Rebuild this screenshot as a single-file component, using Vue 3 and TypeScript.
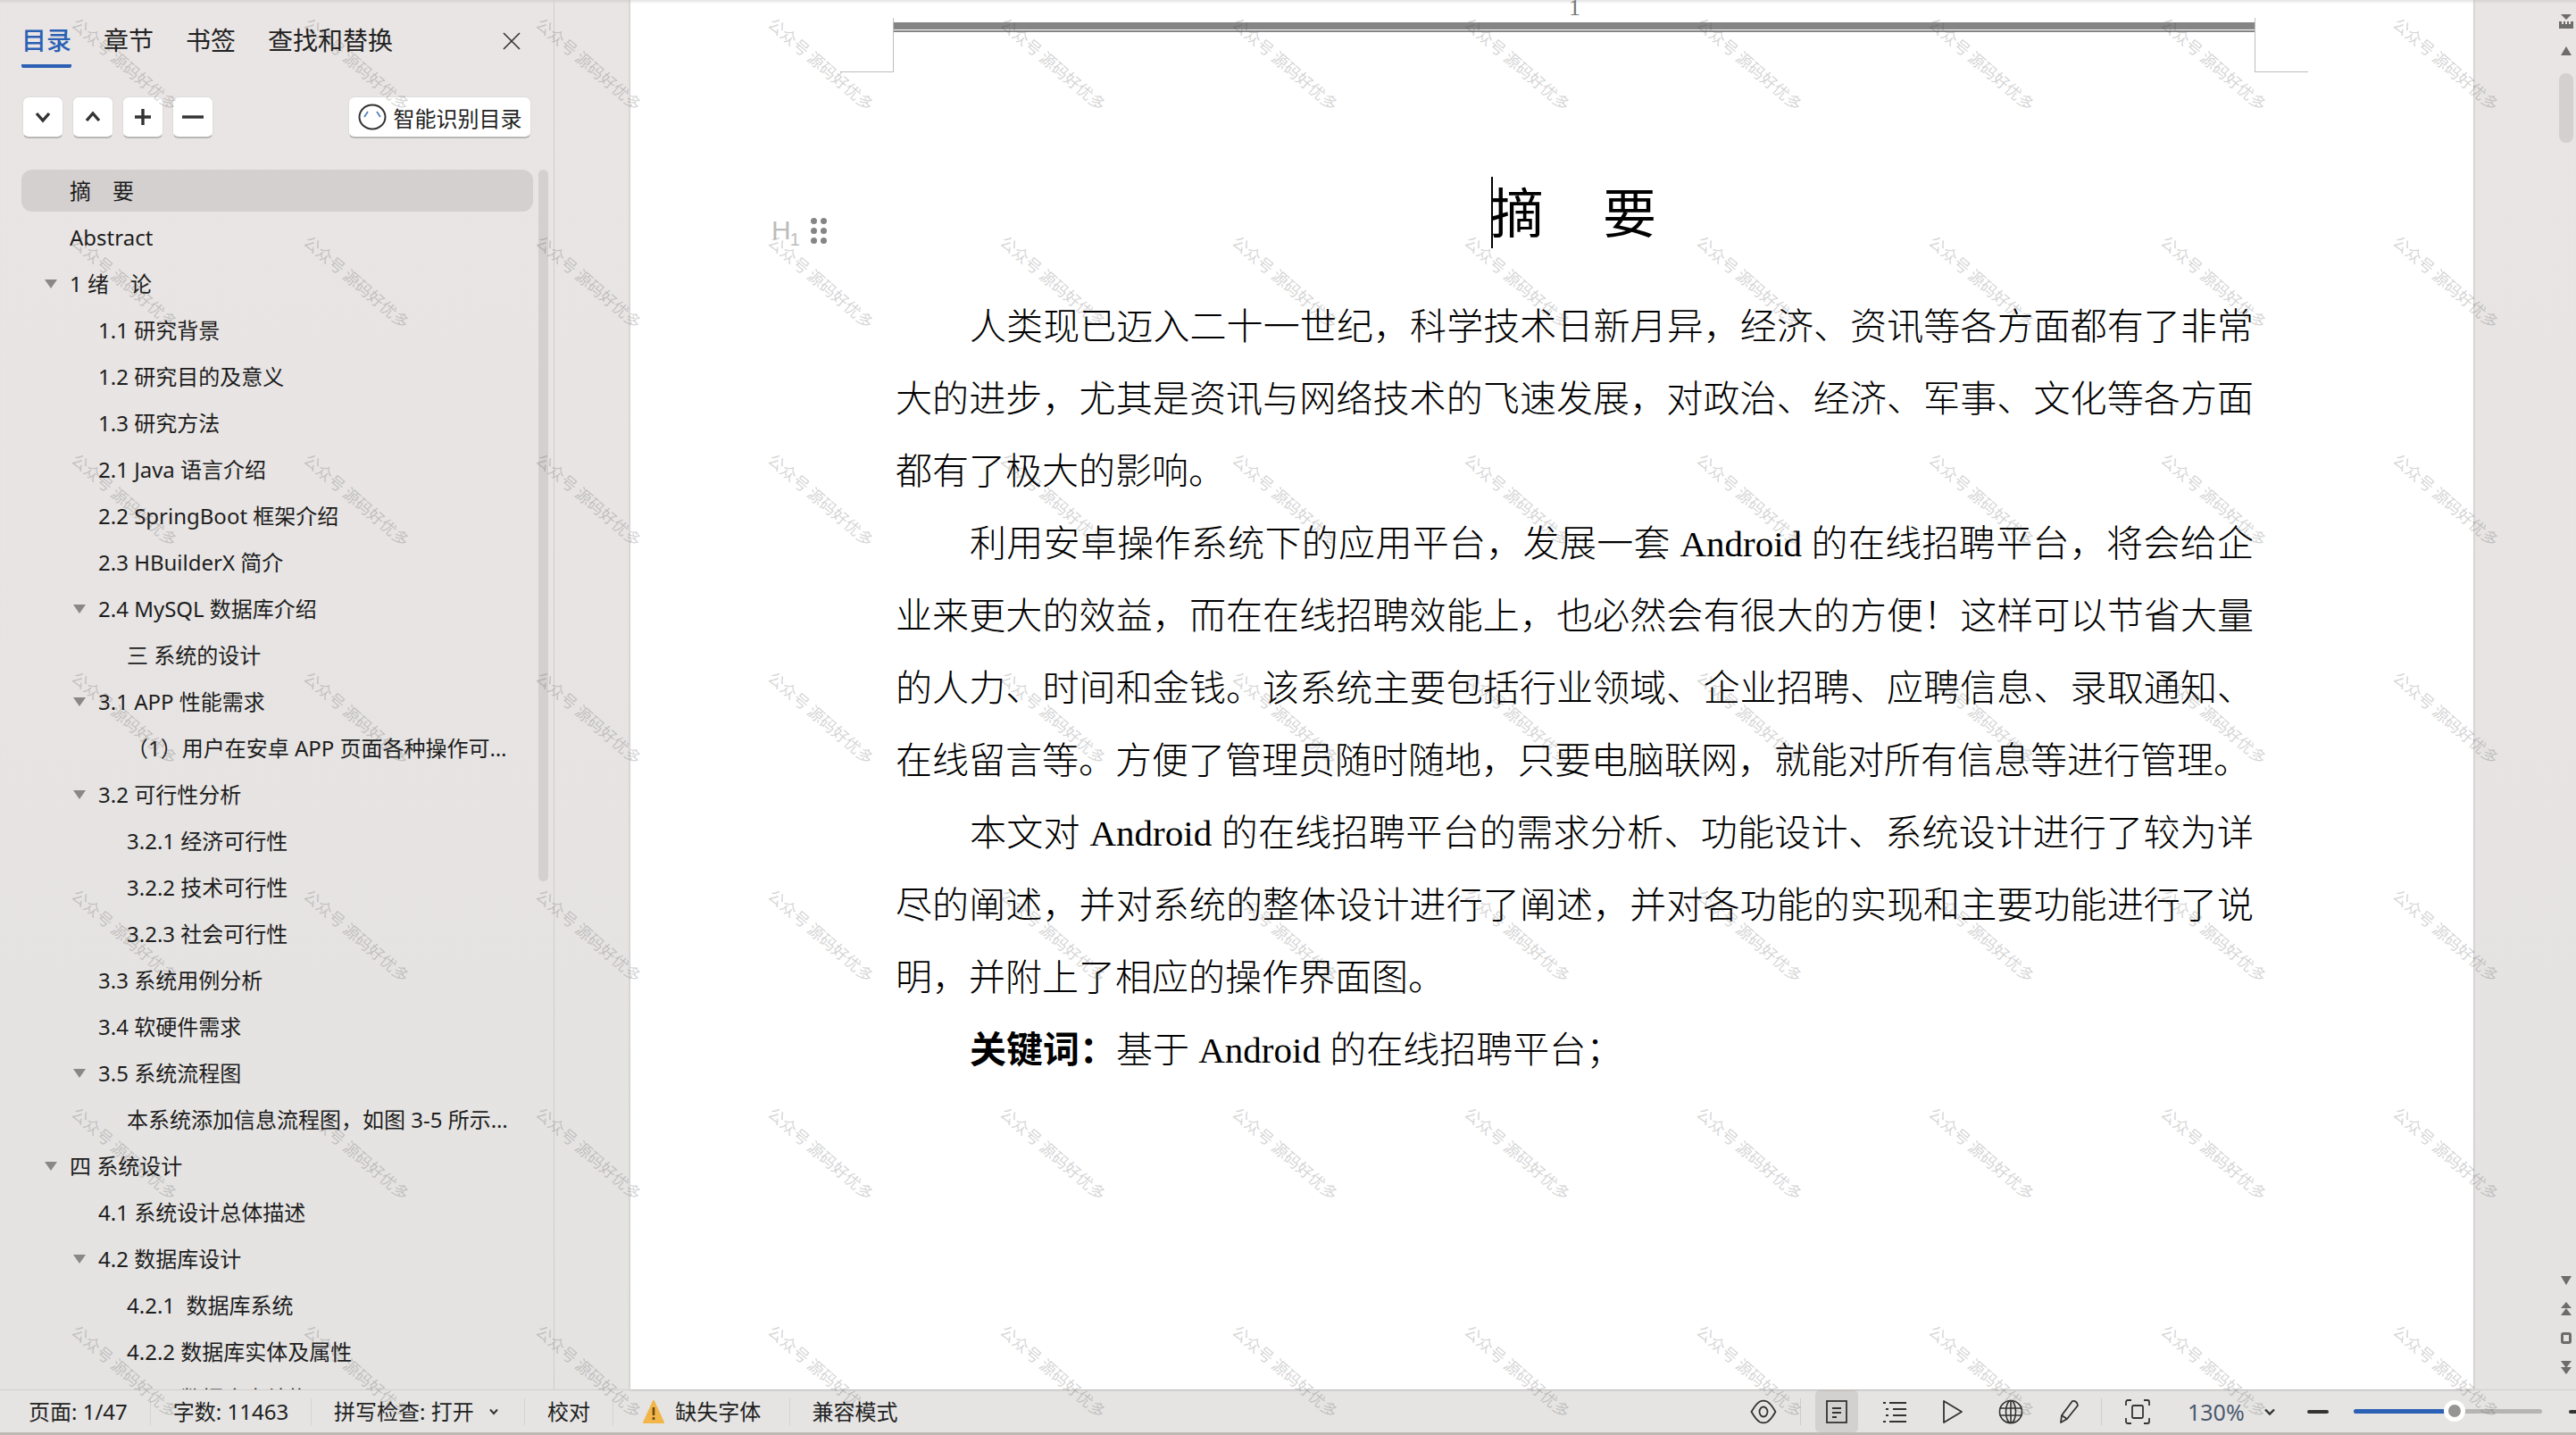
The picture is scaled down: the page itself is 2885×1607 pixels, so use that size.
<script setup lang="ts">
interface TocRow {
  text: string
  level: 0 | 1 | 2
  open?: boolean
  active?: boolean
}

const tabs = ['目录', '章节', '书签', '查找和替换']

const toc: TocRow[] = [
  { text: '摘　要', level: 0, active: true },
  { text: 'Abstract', level: 0 },
  { text: '1 绪　论', level: 0, open: true },
  { text: '1.1 研究背景', level: 1 },
  { text: '1.2 研究目的及意义', level: 1 },
  { text: '1.3 研究方法', level: 1 },
  { text: '2.1 Java 语言介绍', level: 1 },
  { text: '2.2 SpringBoot 框架介绍', level: 1 },
  { text: '2.3 HBuilderX 简介', level: 1 },
  { text: '2.4 MySQL 数据库介绍', level: 1, open: true },
  { text: '三 系统的设计', level: 2 },
  { text: '3.1 APP 性能需求', level: 1, open: true },
  { text: '（1）用户在安卓 APP 页面各种操作可以得到及时响应', level: 2 },
  { text: '3.2 可行性分析', level: 1, open: true },
  { text: '3.2.1 经济可行性', level: 2 },
  { text: '3.2.2 技术可行性', level: 2 },
  { text: '3.2.3 社会可行性', level: 2 },
  { text: '3.3 系统用例分析', level: 1 },
  { text: '3.4 软硬件需求', level: 1 },
  { text: '3.5 系统流程图', level: 1, open: true },
  { text: '本系统添加信息流程图，如图 3-5 所示：添加信息', level: 2 },
  { text: '四 系统设计', level: 0, open: true },
  { text: '4.1 系统设计总体描述', level: 1 },
  { text: '4.2 数据库设计', level: 1, open: true },
  { text: '4.2.1  数据库系统', level: 2 },
  { text: '4.2.2 数据库实体及属性', level: 2 },
  { text: '4.2.3 数据库表结构', level: 2 },
]

const paragraphs: string[][] = [
  [
    '人类现已迈入二十一世纪，科学技术日新月异，经济、资讯等各方面都有了非常',
    '大的进步，尤其是资讯与网络技术的飞速发展，对政治、经济、军事、文化等各方面',
    '都有了极大的影响。',
  ],
  [
    '利用安卓操作系统下的应用平台，发展一套 Android 的在线招聘平台，将会给企',
    '业来更大的效益，而在在线招聘效能上，也必然会有很大的方便！这样可以节省大量',
    '的人力、时间和金钱。该系统主要包括行业领域、企业招聘、应聘信息、录取通知、',
    '在线留言等。方便了管理员随时随地，只要电脑联网，就能对所有信息等进行管理。',
  ],
  [
    '本文对 Android 的在线招聘平台的需求分析、功能设计、系统设计进行了较为详',
    '尽的阐述，并对系统的整体设计进行了阐述，并对各功能的实现和主要功能进行了说',
    '明，并附上了相应的操作界面图。',
  ],
]

const watermarks = 11 * 7
</script>

<template>
  <div class="app">
    <div class="main">
      <aside class="side">
        <div class="panel">
          <div class="tabs">
            <span v-for="(tab, i) in tabs" :key="tab" class="tab" :class="{ on: i === 0 }">{{ tab }}</span>
            <svg class="close" width="22" height="22" viewBox="0 0 22 22" fill="none" stroke="#333" stroke-width="1.6">
              <path d="M2 2 20 20M20 2 2 20" />
            </svg>
          </div>
          <div class="tools">
            <button class="tool">
              <svg width="20" height="20" viewBox="0 0 20 20" fill="none" stroke="#333" stroke-width="3.4"><path d="M3 6 10 14 17 6" /></svg>
            </button>
            <button class="tool">
              <svg width="20" height="20" viewBox="0 0 20 20" fill="none" stroke="#333" stroke-width="3.4"><path d="M3 14 10 6 17 14" /></svg>
            </button>
            <button class="tool">
              <svg width="20" height="22" viewBox="0 0 20 22" fill="none" stroke="#333" stroke-width="3.4"><path d="M1 11H19M10 2V20" /></svg>
            </button>
            <button class="tool">
              <svg width="24" height="20" viewBox="0 0 24 20" fill="none" stroke="#333" stroke-width="3.4"><path d="M0 10H24" /></svg>
            </button>
            <button class="ai">
              <svg width="32" height="30" viewBox="0 0 32 30" fill="none">
                <ellipse cx="16" cy="15" rx="14.5" ry="13.5" stroke="#333" stroke-width="2" />
                <path d="M7 15 11 9M25 15 21 9" stroke="#4a78b8" stroke-width="1.6" />
              </svg>
              <span>智能识别目录</span>
            </button>
          </div>
          <div class="tree-wrap">
            <ul class="tree">
              <li v-for="row in toc" :key="row.text" class="row" :class="['lv' + row.level, { active: row.active }]">
                <i class="caret" :class="{ open: row.open }"></i>
                <span class="row-text">{{ row.text }}</span>
              </li>
            </ul>
            <div class="tree-thumb"></div>
          </div>
        </div>
      </aside>

      <main class="page">
        <div class="page-no">1</div>
        <div class="head-rule"></div>
        <div class="heading">
          <span class="h-mark">H<sub>1</sub></span>
          <span class="grip"><i v-for="n in 6" :key="n"></i></span>
          <i class="cursor"></i>
          <h1 class="title">摘　要</h1>
        </div>
        <div class="body">
          <p v-for="(lines, i) in paragraphs" :key="i" class="para">
            <span v-for="(line, j) in lines" :key="j" class="line" :class="{ first: j === 0, last: j === lines.length - 1 }">{{ line }}</span>
          </p>
          <p class="para">
            <span class="line first last"><b>关键词：</b>基于 Android 的在线招聘平台；</span>
          </p>
        </div>
      </main>

      <aside class="rail">
        <svg width="16" height="16" viewBox="0 0 16 16" fill="#6e6b6b"><path d="M2 0H14L8 6ZM0 8H3V11H5V8H7V11H9V8H11V11H13V8H16V16H0Z" /></svg>
        <svg class="rail-up" width="12" height="10" viewBox="0 0 12 10" fill="#6e6b6b"><path d="M6 0 12 10H0Z" /></svg>
        <div class="rail-thumb"></div>
        <div class="rail-foot">
          <svg width="12" height="10" viewBox="0 0 12 10" fill="#6e6b6b"><path d="M0 0H12L6 10Z" /></svg>
          <svg width="12" height="15" viewBox="0 0 12 15" fill="#6e6b6b"><path d="M6 0 12 7H0ZM6 7 12 15H0Z" /></svg>
          <svg width="12" height="13" viewBox="0 0 12 13" fill="none" stroke="#6e6b6b" stroke-width="3"><rect x="1.5" y="1.5" width="9" height="10" rx="1.5" /></svg>
          <svg width="12" height="15" viewBox="0 0 12 15" fill="#6e6b6b"><path d="M0 0H12L6 8ZM0 7H12L6 15Z" /></svg>
        </div>
      </aside>
    </div>

    <footer class="status">
      <div class="status-left">
        <span class="item">页面: 1/47</span>
        <span class="item">字数: 11463</span>
        <span class="item">拼写检查: 打开
          <svg class="chev" width="10" height="8" viewBox="0 0 10 8" fill="none" stroke="#333" stroke-width="2"><path d="M1 1.5 5 6 9 1.5" /></svg>
        </span>
        <span class="item">校对</span>
        <span class="item warn">
          <svg width="24" height="26" viewBox="0 0 24 26"><path d="M12 1 23 25H1Z" fill="#f2b54a" stroke="#f2b54a" stroke-linejoin="round" stroke-width="2" /><path d="M12 8V17M12 19V22" stroke="#6b4a10" stroke-width="2.6" /></svg>
          缺失字体
        </span>
        <span class="item last-item">兼容模式</span>
      </div>
      <div class="status-right">
        <span class="ico">
          <svg width="30" height="28" viewBox="0 0 30 28" fill="none" stroke="#333" stroke-width="1.8"><path d="M1.5 14C5 8 8 4 11 2.5 13.500 1.500 16.500 1.500 19 2.500 22 4 25 8 28.500 14 25 20 22 24 19 25.500 16.500 26.500 13.500 26.500 11 25.500 8 24 5 20 1.500 14Z" /><ellipse cx="15" cy="14" rx="4.500" ry="5.500" /></svg>
        </span>
        <span class="sep"></span>
        <span class="ico on">
          <svg width="24" height="26" viewBox="0 0 24 26" fill="none" stroke="#333" stroke-width="1.8"><rect x="1" y="1" width="22" height="24" /><path d="M7 9H17M7 14H17M7 19H12" /></svg>
        </span>
        <span class="ico">
          <svg width="28" height="24" viewBox="0 0 28 24" fill="none" stroke="#333" stroke-width="1.8"><path d="M8 2H27M12 9H27M12 16H27M8 23H27M1 2H4M4 9H7M4 16H7M1 23H4" /></svg>
        </span>
        <span class="ico">
          <svg width="24" height="28" viewBox="0 0 24 28" fill="none" stroke="#333" stroke-width="1.8"><path d="M2 2 22 14 2 26Z" stroke-linejoin="round" /></svg>
        </span>
        <span class="ico">
          <svg width="28" height="28" viewBox="0 0 28 28" fill="none" stroke="#333" stroke-width="1.6"><circle cx="14" cy="14" r="12.5" /><ellipse cx="14" cy="14" rx="5.5" ry="12.5" /><path d="M14 1.5V26.5M1.5 10H26.5M1.5 18H26.5" /></svg>
        </span>
        <span class="ico pen">
          <svg width="28" height="28" viewBox="0 0 28 28" fill="none" stroke="#333" stroke-width="1.8" stroke-linejoin="round"><path d="M8 18 20 2C23 1 26 4 26 7L14 22 7 26Z" /><path d="M8 18 14 22" /></svg>
        </span>
        <span class="sep narrow"></span>
        <span class="ico">
          <svg width="28" height="28" viewBox="0 0 28 28" fill="none" stroke="#333" stroke-width="1.8"><path d="M1 7V3C1 2 2 1 3 1H7M21 1H25C26 1 27 2 27 3V7M27 21V25C27 26 26 27 25 27H21M7 27H3C2 27 1 26 1 25V21" /><rect x="8" y="7" width="12" height="14" rx="1.5" /></svg>
        </span>
        <span class="zoom">130%</span>
        <svg class="zoom-chev" width="12" height="8" viewBox="0 0 12 8" fill="none" stroke="#333" stroke-width="2.4"><path d="M1 1.5 6 6.5 11 1.5" /></svg>
        <span class="minus"></span>
        <div class="slider">
          <div class="slider-fill"></div>
          <div class="slider-knob"></div>
        </div>
        <span class="plus"></span>
      </div>
    </footer>

    <div class="marks">
      <span v-for="n in watermarks" :key="n" class="mark"><span>公众号 源码好优多</span></span>
    </div>
  </div>
</template>

<style scoped>
.app {
  position: relative;
  width: 2885px;
  height: 1607px;
  overflow: hidden;
  display: flex;
  flex-direction: column;
  background: linear-gradient(180deg, #e9e5e4, #e4e3e2);
  font-family: "Noto Sans", "Noto Sans CJK SC", sans-serif;
  color: #222;
}

.main {
  flex: 1;
  min-height: 0;
  display: flex;
}

.side {
  flex: none;
  width: 706px;
  box-shadow: inset 0 4px 3px -2px #d4d2d1;
}

.panel {
  width: 621px;
  height: 100%;
  box-sizing: border-box;
  border-right: 1px solid #d0cdcc;
  display: flex;
  flex-direction: column;
}

.tabs {
  height: 72px;
  box-sizing: border-box;
  padding: 26px 0 0 24px;
  display: flex;
  gap: 36px;
  position: relative;
}

.tab {
  font-size: 28px;
  line-height: 38px;
  height: 46px;
  font-weight: 400;
}

.tab.on {
  color: #2b60b5;
  font-weight: 500;
  border-bottom: 4px solid #2b60b5;
  border-radius: 0 0 2px 2px;
}

.close {
  position: absolute;
  left: 562px;
  top: 35px;
}

.tools {
  margin-top: 36px;
  height: 47px;
  padding: 0 25px 0 25px;
  display: flex;
  gap: 10px;
}

.tool,
.ai {
  border: 1px solid #dedcdb;
  border-bottom: 2px solid #b9b7b6;
  border-radius: 7px;
  background: #fff;
  padding: 0;
  display: flex;
  align-items: center;
  justify-content: center;
  font-family: inherit;
  color: #222;
}

.tool {
  width: 46px;
}

.ai {
  margin-left: auto;
  width: 205px;
  gap: 8px;
  font-size: 24px;
}

.tree-wrap {
  margin-top: 35px;
  flex: 1;
  min-height: 0;
  display: flex;
  overflow: hidden;
}

.tree {
  list-style: none;
  margin: 0 0 0 24px;
  padding: 0;
  width: 573px;
  flex: none;
  display: flex;
  flex-direction: column;
  gap: 5px;
}

.row {
  flex: none;
  height: 47px;
  border-radius: 12px;
  display: flex;
  align-items: center;
  font-size: 24px;
  color: #1d1d1d;
  padding-right: 7px;
}

.row.active {
  background: #d3d0cf;
}

.lv0 {
  padding-left: 26px;
}

.lv1 {
  padding-left: 58px;
}

.lv2 {
  padding-left: 90px;
}

.caret {
  flex: none;
  width: 28px;
  height: 10px;
}

.caret.open::before {
  content: "";
  display: block;
  width: 0;
  border-left: 7px solid transparent;
  border-right: 7px solid transparent;
  border-top: 10px solid #8a8887;
}

.row-text {
  white-space: pre;
  overflow: hidden;
  text-overflow: ellipsis;
  line-height: 32px;
}

.tree-thumb {
  flex: none;
  margin-left: 6px;
  width: 11px;
  height: 797px;
  border-radius: 6px;
  background: #d3d0cf;
}

.page {
  flex: 1;
  min-width: 0;
  position: relative;
  background: #fff;
  box-shadow: inset 0 4px 3px -2px #e2e2e2, 0 0 3px rgba(0, 0, 0, 0.22);
  padding: 0 246px 0 297px;
  font-family: "Liberation Serif", "Noto Sans CJK SC", serif;
  color: #000;
}

.page-no {
  height: 25px;
  font-size: 26px;
  line-height: 18px;
  text-align: center;
  color: #777;
}

.head-rule {
  position: relative;
  margin-left: -2px;
  margin-right: -1px;
  height: 11px;
  box-sizing: border-box;
  border-top: 8px solid #858585;
  border-bottom: 2px solid #858585;
}

.head-rule::before,
.head-rule::after {
  content: "";
  position: absolute;
  top: -13px;
  width: 60px;
  height: 61px;
  box-sizing: border-box;
  border-bottom: 1px solid #bdbdbd;
}

.head-rule::before {
  left: -60px;
  border-right: 1px solid #bdbdbd;
}

.head-rule::after {
  right: -60px;
  border-left: 1px solid #bdbdbd;
}

.heading {
  position: relative;
  margin-top: 162px;
  height: 80px;
}

.h-mark {
  position: absolute;
  left: -139px;
  top: 45px;
  font-family: "Liberation Sans", sans-serif;
  font-size: 30px;
  line-height: 30px;
  color: #bcbcbc;
}

.h-mark sub {
  font-size: 20px;
  line-height: 0;
  margin-left: -1px;
}

.grip {
  position: absolute;
  left: -95px;
  top: 46px;
  width: 18px;
  display: grid;
  grid-template-columns: 7px 7px;
  gap: 4px 4px;
}

.grip i {
  width: 7px;
  height: 7px;
  border-radius: 50%;
  background: #858585;
}

.cursor {
  position: absolute;
  left: 667px;
  top: 0;
  width: 2px;
  height: 80px;
  background: #000;
}

.title {
  margin: 0;
  padding-top: 3px;
  font-size: 60px;
  line-height: 80px;
  font-weight: 400;
  letter-spacing: 3px;
  text-align: center;
}

.body {
  margin-top: 48px;
  font-size: 41px;
  font-weight: 300;
}

.para {
  margin: 0;
}

.line {
  display: block;
  height: 81px;
  line-height: 81px;
  white-space: nowrap;
  text-align: justify;
  text-align-last: justify;
}

.line.first {
  padding-left: 83px;
}

.line.last {
  text-align-last: left;
}

.line b {
  font-weight: 700;
}

.rail {
  flex: none;
  width: 115px;
  box-sizing: border-box;
  padding: 16px 0 0 93px;
  display: flex;
  flex-direction: column;
  align-items: center;
  box-shadow: inset 0 4px 3px -2px #d4d2d1;
}

.rail-up {
  margin-top: 20px;
}

.rail-thumb {
  margin-top: 20px;
  width: 16px;
  height: 78px;
  border-radius: 8px;
  background: #d3d0cf;
}

.rail-foot {
  margin-top: auto;
  margin-bottom: 17px;
  display: flex;
  flex-direction: column;
  align-items: center;
  gap: 19px;
}

.status {
  flex: none;
  height: 51px;
  box-sizing: border-box;
  border-top: 1px solid #cfcdcb;
  border-bottom: 3px solid #bdbab6;
  background: #e5e4e3;
  display: flex;
  align-items: stretch;
  font-size: 24px;
  color: #222;
}

.status-left {
  flex: none;
  width: 1951px;
  padding-left: 7px;
  box-sizing: border-box;
  display: flex;
  align-items: center;
}

.item {
  display: flex;
  align-items: center;
  height: 30px;
  padding: 0 25px;
  white-space: pre;
  border-right: 1px solid #d5d3d2;
  line-height: 30px;
}

.last-item {
  border-right: 0;
}

.chev {
  margin: 0 4px 0 11px;
}

.warn svg {
  margin: 0 6px 0 8px;
}

.status-right {
  flex: none;
  display: flex;
  align-items: center;
  height: 100%;
}

.ico {
  flex: none;
  width: 48px;
  height: 100%;
  display: flex;
  align-items: center;
  justify-content: center;
  margin-right: 17px;
}

.ico.on {
  background: #d3d1d0;
  border-radius: 5px;
}

.ico.pen svg {
  margin-left: -4px;
}

.sep {
  flex: none;
  width: 1px;
  height: 30px;
  background: #cfcdcc;
  margin-right: 16px;
}

.sep.narrow {
  margin-left: -5px;
}

.zoom {
  margin-left: 15px;
  width: 62px;
  font-size: 25px;
  color: #4c5a70;
}

.zoom-chev {
  margin-left: 24px;
}

.minus {
  margin-left: 36px;
  width: 24px;
  height: 4px;
  border-radius: 2px;
  background: #333;
}

.slider {
  position: relative;
  margin-left: 28px;
  width: 211px;
  height: 5px;
  border-radius: 3px;
  background: #b6b5b4;
}

.slider-fill {
  width: 113px;
  height: 100%;
  border-radius: 3px;
  background: #2b60b5;
}

.slider-knob {
  position: absolute;
  left: 101px;
  top: -10px;
  width: 24px;
  height: 24px;
  box-sizing: border-box;
  border: 5px solid #fff;
  border-radius: 50%;
  background: #969594;
}

.plus {
  margin-left: 30px;
  width: 24px;
  height: 4px;
  border-radius: 2px;
  background: #333;
}

.marks {
  position: absolute;
  left: 10px;
  top: -51px;
  display: grid;
  grid-template-columns: repeat(11, 260px);
  grid-auto-rows: 244px;
  pointer-events: none;
}

.mark {
  display: flex;
  align-items: center;
  justify-content: center;
  font-family: "Noto Sans CJK SC", sans-serif;
  font-size: 18px;
  color: rgba(70, 70, 70, 0.24);
  white-space: nowrap;
}

.mark span {
  transform: rotate(40.5deg);
}
</style>

<style>
html,
body {
  margin: 0;
  background: #e5e4e3;
}
</style>
